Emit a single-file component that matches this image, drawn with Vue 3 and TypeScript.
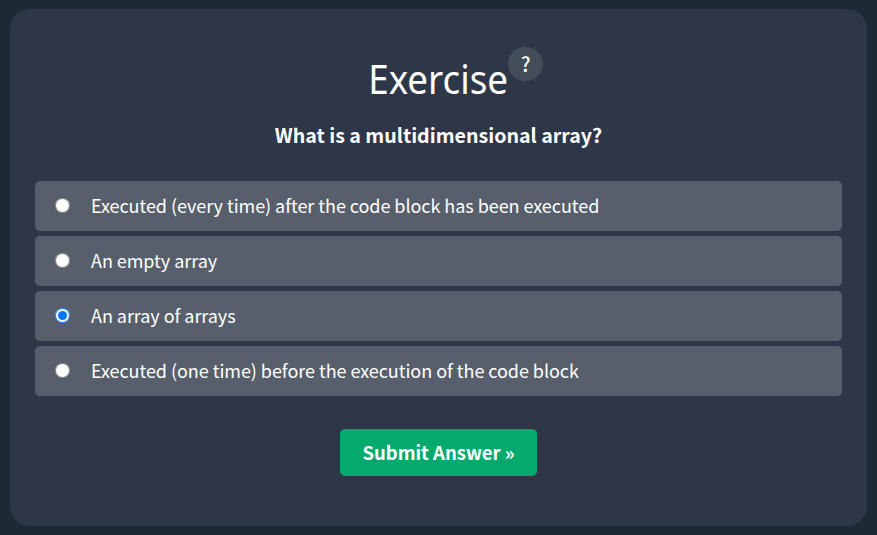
<script setup lang="ts">
import { ref } from 'vue'

const options: string[] = [
  'Executed (every time) after the code block has been executed',
  'An empty array',
  'An array of arrays',
  'Executed (one time) before the execution of the code block',
]
const selected = ref<number>(2)
</script>

<template>
  <main class="page">
    <form class="card" @submit.prevent>
      <h2 class="title"><span class="word">Exercise</span><span class="help">?</span></h2>
      <p class="question">What is a multidimensional array?</p>
      <div class="options">
        <label v-for="(text, i) in options" :key="text" class="option">
          <input v-model="selected" type="radio" name="answer" :value="i" />
          <span class="text">{{ text }}</span>
        </label>
      </div>
      <button class="submit" type="submit">Submit Answer »</button>
    </form>
  </main>
</template>

<style>
body {
  background: #1d2a35;
}
</style>

<style scoped>
.page {
  box-sizing: border-box;
  height: 535px;
  padding: 9px 10px;
  background: #1d2a35;
  color: #fff;
  font-family: 'Noto Sans CJK SC', 'Noto Sans', sans-serif;
}
.card {
  box-sizing: border-box;
  height: 517px;
  padding: 38px 25px 0;
  border-radius: 20px;
  background: #2e3748;
  display: flex;
  flex-direction: column;
  align-items: center;
}
.title {
  margin: 0 0 0 34px;
  height: 64px;
  display: flex;
  align-items: flex-start;
  font: 400 40px/64px 'Noto Sans', sans-serif;
}
.word {
  margin-left: -12px;
  transform: scaleX(0.92);
  transform-origin: right center;
}
.help {
  width: 35px;
  height: 34px;
  border-radius: 50%;
  background: #434c59;
  font: 500 20px/33px 'Noto Sans CJK SC', sans-serif;
  text-align: center;
}
.question {
  margin: 8px 0 0;
  font-size: 19.6px;
  font-weight: 700;
  line-height: 32px;
}
.options {
  width: 100%;
  margin-top: 30px;
  display: grid;
  gap: 5px;
}
.option {
  height: 50px;
  display: flex;
  align-items: center;
  border-radius: 5px;
  background: #585f6c;
  font-size: 18px;
  letter-spacing: -0.05px;
  line-height: 48px;
}
input {
  width: 15px;
  height: 15px;
  margin: 0 21px 2px 20px;
}
.text {
  padding-bottom: 2px;
  white-space: nowrap;
}
.submit {
  width: 197px;
  height: 47px;
  margin-top: 33px;
  padding: 0 0 1px;
  border: 0;
  border-radius: 5px;
  background: #04aa6d;
  color: #fff;
  font: 700 18.5px/46px 'Noto Sans CJK SC', sans-serif;
}
</style>
